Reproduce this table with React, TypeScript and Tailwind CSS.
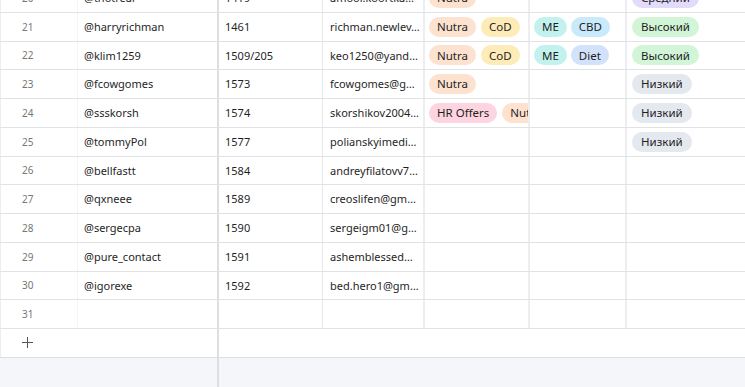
import React from "react";

type Tag = { t: string; c: string };

const C = {
  nutra: "bg-[#fde2d0]",
  cod: "bg-[#fdebb8]",
  me: "bg-[#c3f1ed]",
  cbd: "bg-[#c8eafb]",
  diet: "bg-[#d3e2fb]",
  hr: "bg-[#fdd4e0]",
  high: "bg-[#d2f5d7]",
  low: "bg-[#e4e8ef]",
  mid: "bg-[#e3dbfb]",
};

type Row = {
  n: number;
  user: string;
  id: string;
  email: string;
  t1: Tag[];
  t2: Tag[];
  st?: Tag;
};

const rows: Row[] = [
  { n: 20, user: "@thotreal", id: "1419", email: "amoor.koortka…", t1: [{ t: "Nutra", c: C.nutra }], t2: [], st: { t: "Средний", c: C.mid } },
  { n: 21, user: "@harryrichman", id: "1461", email: "richman.newlev…", t1: [{ t: "Nutra", c: C.nutra }, { t: "CoD", c: C.cod }], t2: [{ t: "ME", c: C.me }, { t: "CBD", c: C.cbd }], st: { t: "Высокий", c: C.high } },
  { n: 22, user: "@klim1259", id: "1509/205", email: "keo1250@yand…", t1: [{ t: "Nutra", c: C.nutra }, { t: "CoD", c: C.cod }], t2: [{ t: "ME", c: C.me }, { t: "Diet", c: C.diet }], st: { t: "Высокий", c: C.high } },
  { n: 23, user: "@fcowgomes", id: "1573", email: "fcowgomes@g…", t1: [{ t: "Nutra", c: C.nutra }], t2: [], st: { t: "Низкий", c: C.low } },
  { n: 24, user: "@ssskorsh", id: "1574", email: "skorshikov2004…", t1: [{ t: "HR Offers", c: C.hr }, { t: "Nutra", c: C.nutra }], t2: [], st: { t: "Низкий", c: C.low } },
  { n: 25, user: "@tommyPol", id: "1577", email: "polianskyimedi…", t1: [], t2: [], st: { t: "Низкий", c: C.low } },
  { n: 26, user: "@bellfastt", id: "1584", email: "andreyfilatovv7…", t1: [], t2: [] },
  { n: 27, user: "@qxneee", id: "1589", email: "creoslifen@gm…", t1: [], t2: [] },
  { n: 28, user: "@sergecpa", id: "1590", email: "sergeigm01@g…", t1: [], t2: [] },
  { n: 29, user: "@pure_contact", id: "1591", email: "ashemblessed…", t1: [], t2: [] },
  { n: 30, user: "@igorexe", id: "1592", email: "bed.hero1@gm…", t1: [], t2: [] },
  { n: 31, user: "", id: "", email: "", t1: [], t2: [] },
];

function Pill({ tag, wide }: { tag: Tag; wide?: boolean }) {
  return (
    <span
      className={`shrink-0 h-[20px] rounded-full flex items-center text-[11.5px] text-[#1f1f1f] leading-none ${
        wide ? "px-[9px]" : "px-[8px]"
      } ${tag.c}`}
    >
      {tag.t}
    </span>
  );
}

export default function App() {
  return (
    <div
      className="w-[745px] h-[387px] overflow-hidden bg-white flex flex-col text-[#1f1f1f]"
      style={{ fontFamily: '"Segoe UI", "Noto Sans", "Open Sans", sans-serif' }}
    >
      <div className="-mt-[16px] flex flex-col">
        {rows.map((r) => (
          <div key={r.n} className="flex h-[28.75px] shrink-0 border-b border-[#e0e2e6]">
            <div className="w-[78px] shrink-0 border-r border-[#f3f4f6] border-l border-l-[#eceef1] pl-[21px] pt-[1px] flex items-center text-[10px] text-[#777]">
              {r.n}
            </div>
            <div className="w-[141px] shrink-0 border-r-2 border-[#dcdee2] pl-[6px] pt-[1px] flex items-center text-[11px] whitespace-nowrap overflow-hidden">
              {r.user}
            </div>
            <div className="w-[104px] shrink-0 border-r border-[#e6e8eb] pl-[6px] pt-[1px] flex items-center text-[11px] whitespace-nowrap overflow-hidden">
              {r.id}
            </div>
            <div className="w-[102px] shrink-0 border-r-2 border-[#eceef1] pl-[7px] pt-[1px] flex items-center text-[11px] whitespace-nowrap overflow-hidden">
              {r.email}
            </div>
            <div className="w-[105px] shrink-0 border-r-2 border-[#eceef1] pl-[4px] flex items-center gap-[5px] overflow-hidden">
              {r.t1.map((t) => (
                <Pill key={t.t} tag={t} />
              ))}
            </div>
            <div className="w-[97px] shrink-0 border-r-2 border-[#eceef1] pl-[4px] flex items-center gap-[4px] overflow-hidden">
              {r.t2.map((t) => (
                <Pill key={t.t} tag={t} />
              ))}
            </div>
            <div className="flex-1 pl-[5px] flex items-center overflow-hidden">
              {r.st && <Pill tag={r.st} wide />}
            </div>
          </div>
        ))}
        <div className="flex h-[28.75px] shrink-0 border-b border-[#dcdee2]">
          <div className="w-[219px] shrink-0 border-r-2 border-[#dcdee2] border-l border-l-[#eceef1] pl-[20px] flex items-center">
            <svg width="13" height="13" viewBox="0 0 13 13" fill="none">
              <path d="M6.5 1v11M1 6.5h11" stroke="#555" strokeWidth="1" />
            </svg>
          </div>
          <div className="flex-1" />
        </div>
      </div>
      <div className="flex flex-1 bg-[#f5f6f9]">
        <div className="w-[219px] shrink-0 border-r-2 border-[#dcdee2]" />
        <div className="flex-1" />
      </div>
    </div>
  );
}
